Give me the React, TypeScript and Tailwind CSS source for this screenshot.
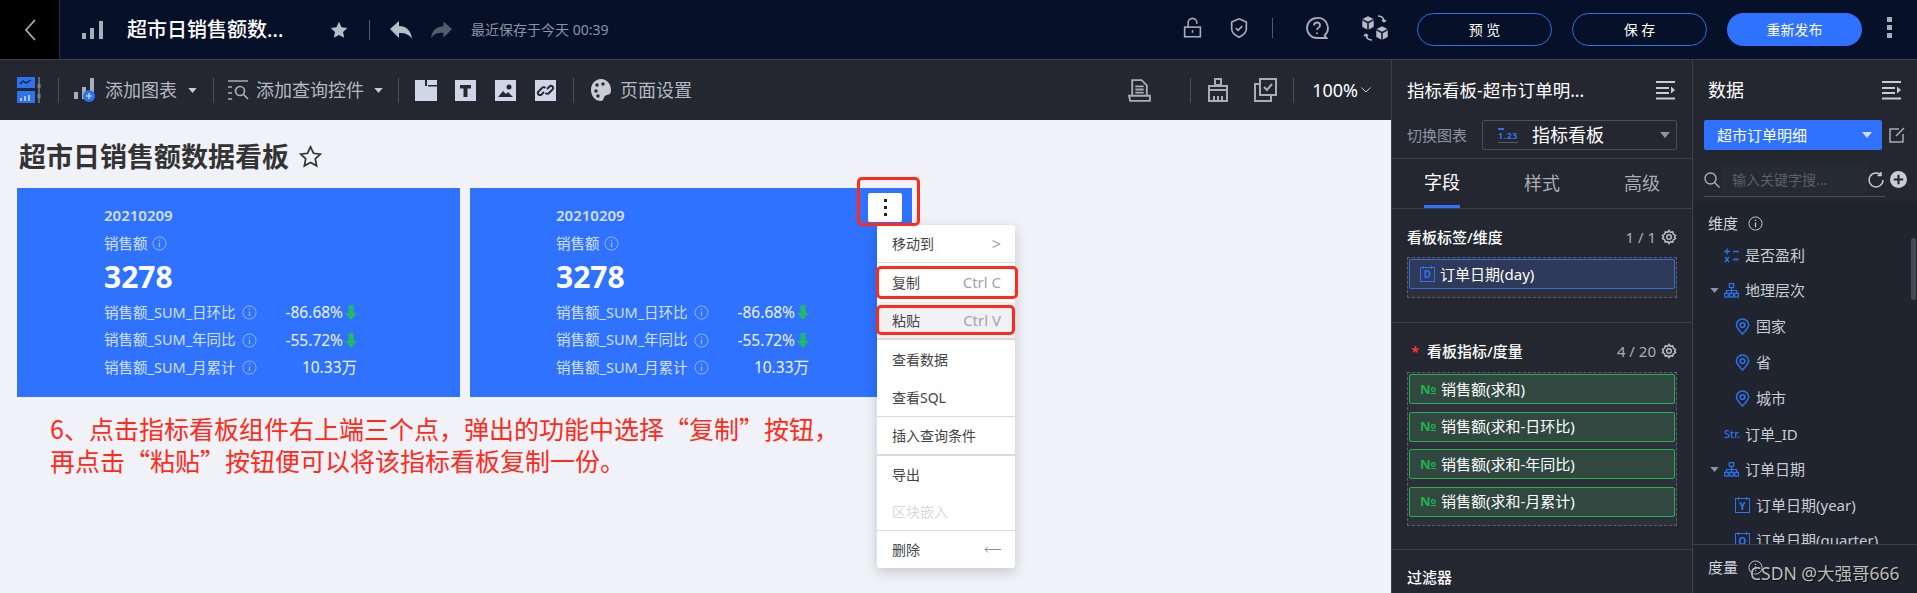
const Sep = ({ h = "h-[25px]", c = "bg-[#4a4e58]" }: { h?: string; c?: string }) => <div className={`w-px shrink-0 ${h} ${c}`} />

const Caret = ({ className = "" }: { className?: string }) => (
  <svg viewBox="0 0 10 6" className={`w-[9px] h-[5px] shrink-0 ${className}`}><path d="M0 0h10L5 6z" fill="currentColor" /></svg>
)

const Info = ({ className = "" }: { className?: string }) => (
  <svg viewBox="0 0 16 16" fill="none" stroke="currentColor" className={`w-[15px] h-[15px] shrink-0 ${className}`}>
    <circle cx="8" cy="8" r="7" />
    <path d="M8 7v5M8 4v1.4" strokeWidth="1.3" />
  </svg>
)

const Gear = () => (
  <svg viewBox="0 0 24 24" fill="none" stroke="#b8bcc6" strokeWidth="2.200" className="w-[16px] h-[16px] shrink-0">
    <circle cx="12" cy="12" r="3.500" />
    <path d="M12 2l2 3 3.600-.6 1 3.500 3.200 1.700L20.200 12l1.600 2.400-3.200 1.700-1 3.500L14 19l-2 3-2-3-3.600.6-1-3.500-3.200-1.700L3.800 12 2.200 9.600l3.200-1.700 1-3.500L10 5z" />
  </svg>
)

const Collapse = () => (
  <svg viewBox="0 0 20 20" className="w-[20px] h-[20px] shrink-0" fill="#c9ccd3">
    <rect x="0" y="1" width="19" height="2" />
    <rect x="0" y="7" width="13" height="2" />
    <rect x="0" y="12" width="13" height="2" />
    <rect x="0" y="17.500" width="19" height="2" />
    <path d="M15 6.500l4 3.500-4 3.500z" />
  </svg>
)

const Pin = () => (
  <svg viewBox="0 0 16 18" fill="none" stroke="#2f72f0" strokeWidth="1.600" className="w-[15px] h-[17px] shrink-0">
    <path d="M8 17C4 13 1.500 10.500 1.500 7.500a6.500 6.500 0 0113 0C14.500 10.500 12 13 8 17z" />
    <circle cx="8" cy="7.500" r="2.500" />
  </svg>
)

const Tree = () => (
  <svg viewBox="0 0 16 16" fill="none" stroke="#2f72f0" strokeWidth="1.300" className="w-[15px] h-[15px] shrink-0">
    <rect x="5.700" y="0.700" width="4.600" height="4" />
    <rect x="0.700" y="11" width="3.800" height="4" />
    <rect x="6.100" y="11" width="3.800" height="4" />
    <rect x="11.500" y="11" width="3.800" height="4" />
    <path d="M8 5v6M2.600 11V8h10.800v3" />
  </svg>
)

const CalIcon = ({ letter }: { letter: string }) => (
  <span className="relative flex items-center justify-center w-[15px] h-[15px] border-[1.500px] border-[#2f72f0] text-[#2f72f0] text-[10px] font-bold leading-none shrink-0">
    <span className="absolute left-[2px] right-[2px] -top-[2px] h-[3px] border-x-[1.500px] border-[#2f72f0]" />
    {letter}
  </span>
)

const NoIcon = () => <span className="w-[16px] text-[#22b14c] text-[13px] font-bold leading-none shrink-0">N<span className="text-[9px] underline align-[2px]">o</span></span>

const Pill = ({ children, tone }: { children: React.ReactNode; tone: "blue" | "green" }) => (
  <div className={`h-[30px] flex items-center rounded-[2px] pl-[10px] gap-[5px] text-[15px] text-white border ${tone === "blue" ? "bg-[#2f3a5a] border-[#2e6fe8]" : "bg-[#30483f] border-[#22b14c]"}`}>
    {children}
  </div>
)

const Row = ({ label, value, arrow }: { label: string; value: string; arrow?: boolean }) => (
  <div className="h-[27.500px] flex items-center text-[14.500px]">
    <span className="w-[134px] text-[#d5e0ff] whitespace-nowrap">{label}</span>
    <Info className="ml-[4px] text-[#9dbaff]" />
    <span className={`${arrow ? "w-[86px]" : "w-[100px]"} text-[15.500px] text-right text-[#eef3ff] whitespace-nowrap`}>{value}</span>
    {arrow && (
      <svg viewBox="0 0 12 15" className="ml-[2px] w-[12px] h-[15px] shrink-0"><path d="M3.500 0h5v8H12L6 15 0 8h3.500z" fill="#22b866" /></svg>
    )}
  </div>
)

const Card = ({ first }: { first?: boolean }) => (
  <div className={`${first ? "w-[443px] pl-[87px]" : "w-[442px] pl-[86px]"} h-[209px] bg-[#2e72ff] pt-[16px] shrink-0`}>
    <div className="h-[22px] flex items-center text-[15px] font-semibold text-[#d5e0ff]">20210209</div>
    <div className="h-[25px] mt-[5px] flex items-center gap-[4px] text-[14.500px] text-[#d5e0ff]">
      销售额 <Info className="text-[#9dbaff]" />
    </div>
    <div className="h-[40px] flex items-center text-[30px] font-bold text-white">3278</div>
    <div className="mt-[3px]">
      <Row label="销售额_SUM_日环比" value="-86.68%" arrow />
      <Row label="销售额_SUM_年同比" value="-55.72%" arrow />
      <Row label="销售额_SUM_月累计" value="10.33万" />
    </div>
  </div>
)

const MenuItem = ({ label, hint, disabled, active }: { label: string; hint?: React.ReactNode; disabled?: boolean; active?: boolean }) => (
  <div className={`flex-1 flex items-center justify-between pl-[15px] pr-[14px] text-[14px] ${disabled ? "text-[#d9d9d9]" : "text-[#444]"} ${active ? "bg-[#f0f0f5]" : ""}`}>
    <span>{label}</span>
    {hint && <span className="text-[15px] text-[#a3a3a3]">{hint}</span>}
  </div>
)

const RedBox = ({ className }: { className: string }) => <div className={`absolute border-[3.500px] border-[#ff2a1a] rounded-[5px] ${className}`} />

const LineIcon = ({ children, className }: { children: React.ReactNode; className: string }) => (
  <svg viewBox="0 0 24 24" fill="none" stroke="#a9adb7" strokeWidth="1.800" className={`shrink-0 ${className}`}>{children}</svg>
)

const Tile = ({ children }: { children: React.ReactNode }) => (
  <svg viewBox="0 0 21 21" className="w-[21px] h-[21px] shrink-0">
    <rect width="21" height="21" fill="#cfd6e8" />
    {children}
  </svg>
)

export default function App() {
  return (
    <div className="w-[1917px] h-[593px] overflow-hidden relative bg-[#24272f] font-['Noto_Sans','Noto_Sans_CJK_SC',sans-serif]">
      {/* top bar */}
      <div className="h-[60px] flex items-center bg-[#061028] border-b border-[#3a3f4a]">
        <div className="w-[60px] h-full bg-black border-r border-[#2a2f3c] flex items-center justify-center">
          <svg viewBox="0 0 12 24" fill="none" stroke="#a9adb7" strokeWidth="1.800" className="w-[12px] h-[24px]"><path d="M11 2L2 12l9 10" /></svg>
        </div>
        <svg viewBox="0 0 21 18" className="ml-[22px] w-[21px] h-[18px] shrink-0" fill="#a9adb7">
          <rect x="0" y="12" width="4" height="6" />
          <rect x="8" y="7" width="4" height="11" />
          <rect x="17" y="0" width="4" height="18" />
        </svg>
        <div className="ml-[24px] w-[157px] text-[20px] text-white whitespace-nowrap font-medium">超市日销售额数...</div>
        <svg viewBox="0 0 24 24" className="ml-[46px] w-[18px] h-[18px] shrink-0" fill="#b8bcc6"><path d="M12 1l3.400 7.300 7.600.9-5.600 5.300 1.500 7.900L12 18.500l-6.900 3.900 1.500-7.900L1 9.200l7.600-.9z" /></svg>
        <div className="ml-[21px]"><Sep h="h-[20px]" c="bg-[#555a66]" /></div>
        <svg viewBox="0 0 22 18" className="ml-[20px] w-[22px] h-[18px] shrink-0" fill="#b8bcc6"><path d="M9 0v5c7 0 12 4 13 13-3-5-7-6-13-6v5L0 8z" /></svg>
        <svg viewBox="0 0 22 18" className="ml-[19px] w-[21px] h-[18px] shrink-0" fill="#555b69"><path d="M13 0v5C6 5 1 9 0 18c3-5 7-6 13-6v5l9-9z" /></svg>
        <div className="ml-[19px] text-[14px] text-[#8c93a3] whitespace-nowrap">最近保存于今天 00:39</div>
        <div className="flex-1" />
        <LineIcon className="w-[21px] h-[26px] -mt-[4px]">
          <path d="M7 11V6a5 5 0 0110 0v1" />
          <rect x="3" y="11" width="18" height="11" />
          <path d="M12 14.500v3" />
        </LineIcon>
        <LineIcon className="ml-[25px] w-[22px] h-[24px] -mt-[4px]">
          <path d="M12 2l8 3.500V13c0 4-4 7-8 9-4-2-8-5-8-9V5.500z" />
          <path d="M8.500 12l2.500 2.500 4.500-4.500" />
        </LineIcon>
        <div className="ml-[22px] -mt-[4px]"><Sep h="h-[20px]" c="bg-[#555a66]" /></div>
        <LineIcon className="ml-[32px] w-[24px] h-[24px] -mt-[4px]">
          <path d="M12 2a10 10 0 100 20h9.500l-2-2.600A10 10 0 0012 2z" />
          <path d="M9 9.500a3 3 0 116 0c0 2-3 2.300-3 4.500M12 16.500v1.500" />
        </LineIcon>
        <svg viewBox="0 0 28 28" className="ml-[32px] w-[28px] h-[28px] shrink-0 -mt-[4px]" fill="#b8bcc6" stroke="#061028" strokeWidth="0.500">
          <path d="M1 5l6-3 6 3-6 3zM1 6l5.500 3v7L1 13zM13 6L7.500 9v7l5.500-3z" />
          <path d="M15 15l6-3 6 3-6 3zM15 16l5.500 3v7L15 23zM27 16l-5.500 3v7l5.500-3z" />
          <path d="M17 2c4 0 6 2 6 6M23 8l-2-2M23 8l2-2M11 26c-4 0-6-2-6-6M5 20l-2 2M5 20l2 2" fill="none" stroke="#b8bcc6" strokeWidth="1.500" />
        </svg>
        <button className="ml-[28px] w-[135px] h-[33px] rounded-full border border-[#2f6fe8] text-white text-[14px]">预 览</button>
        <button className="ml-[20px] w-[135px] h-[33px] rounded-full border border-[#2f6fe8] text-white text-[14px]">保 存</button>
        <button className="ml-[20px] w-[135px] h-[33px] rounded-full bg-[#2e72ff] text-white text-[14px]">重新发布</button>
        <div className="ml-[25px] mr-[25px] flex flex-col gap-[3px] -mt-[4px]">
          <span className="w-[5px] h-[5px] bg-[#a9adb7]" />
          <span className="w-[5px] h-[5px] bg-[#a9adb7]" />
          <span className="w-[5px] h-[5px] bg-[#a9adb7]" />
        </div>
      </div>

      <div className="flex h-[533px]">
        {/* left column */}
        <div className="w-[1391px] shrink-0 flex flex-col">
          <div className="h-[60px] shrink-0 flex items-center pl-[17px] text-[18px] text-[#b4b8c2]">
            <svg viewBox="0 0 24 26" className="w-[24px] h-[26px] shrink-0">
              <rect x="0" y="0" width="18" height="11" fill="#2f72f0" />
              <rect x="0" y="14" width="18" height="12" fill="#2f72f0" />
              <path d="M3 7l3-3 3 2 5-3" stroke="#10182c" strokeWidth="1.300" fill="none" />
              <path d="M4 24v-3M8 24v-5M12 24v-6" stroke="#d5e0ff" strokeWidth="1.500" />
              <path d="M22 0v26" stroke="#7b808c" strokeWidth="1.500" />
              <rect x="20.500" y="7" width="3" height="4" fill="#7b808c" />
              <rect x="20.500" y="17" width="3" height="4" fill="#7b808c" />
            </svg>
            <div className="ml-[17px]"><Sep /></div>
            <svg viewBox="0 0 22 24" className="ml-[15px] w-[22px] h-[24px] shrink-0">
              <rect x="0" y="14" width="4" height="7" fill="#a9adb7" />
              <rect x="8" y="9" width="4" height="12" fill="#a9adb7" />
              <rect x="16" y="0" width="4" height="14" fill="#a9adb7" />
              <circle cx="15" cy="18" r="6" fill="#2f72f0" />
              <path d="M15 15v6M12 18h6" stroke="#dfe8ff" strokeWidth="1.200" />
            </svg>
            <span className="ml-[9px] whitespace-nowrap">添加图表</span>
            <Caret className="ml-[11px] text-[#c9ccd3]" />
            <div className="ml-[16px]"><Sep /></div>
            <svg viewBox="0 0 21 20" className="ml-[14px] w-[21px] h-[20px] shrink-0" fill="none" stroke="#a9adb7" strokeWidth="1.700">
              <path d="M0 1h20M0 7h4M0 13h4M0 19h4" />
              <circle cx="12" cy="11" r="4.500" />
              <path d="M15.500 14.500L20 19" />
            </svg>
            <span className="ml-[7px] whitespace-nowrap">添加查询控件</span>
            <Caret className="ml-[10px] text-[#c9ccd3]" />
            <div className="ml-[15px]"><Sep /></div>
            <svg viewBox="0 0 22 21" className="ml-[16px] w-[22px] h-[21px] shrink-0">
              <path d="M0 0h10v6h2V0h10v5H13v1.500h9V21H0z" fill="#cfd6e8" />
            </svg>
            <div className="ml-[18px]"><Tile><path d="M5 5h11v3.500h-3.500V17h-4V8.500H5z" fill="#24272f" /></Tile></div>
            <div className="ml-[19px]"><Tile><path d="M3 17l5-6 3 3 2-2 5 5z" fill="#24272f" /><circle cx="14" cy="7" r="2.500" fill="#24272f" /></Tile></div>
            <div className="ml-[19px]"><Tile><path d="M9 12l-2.500 2.500a2 2 0 01-3-3L7 8a2.500 2.500 0 013.500 0M12 9l2.500-2.500a2 2 0 013 3L14 13a2.500 2.500 0 01-3.500 0" fill="none" stroke="#24272f" strokeWidth="1.800" /></Tile></div>
            <div className="ml-[17px]"><Sep /></div>
            <svg viewBox="0 0 20 24" className="ml-[17px] w-[20px] h-[24px] shrink-0" fill="#c9ccd3">
              <path d="M10 1C4 1 0 6 0 12s4 11 10 11c3 0 2-3 4-5s6 0 6-6c0-6-4-11-10-11z" />
              <circle cx="6" cy="7" r="1.700" fill="#24272f" />
              <circle cx="12" cy="6" r="1.700" fill="#24272f" />
              <circle cx="5" cy="13" r="1.700" fill="#24272f" />
              <circle cx="7" cy="18" r="1.700" fill="#24272f" />
            </svg>
            <span className="ml-[9px] whitespace-nowrap">页面设置</span>
            <div className="flex-1" />
            <LineIcon className="w-[25px] h-[27px]">
              <path d="M5 17V2h9l5 5v10" />
              <path d="M8 8h8M8 11h8M8 14h8" />
              <path d="M2 17h20v5H3z" />
            </LineIcon>
            <div className="ml-[38px]"><Sep /></div>
            <svg viewBox="0 0 22 24" className="ml-[16px] w-[22px] h-[24px] shrink-0" fill="none" stroke="#a9adb7" strokeWidth="2">
              <path d="M8 1h6v6H8zM2 8h18v4H2zM2 12h18v11H2z" />
              <path d="M7 23v-5M11 23v-5M15 23v-5" />
            </svg>
            <svg viewBox="0 0 23 24" className="ml-[25px] w-[23px] h-[24px] shrink-0" fill="none" stroke="#a9adb7" strokeWidth="2">
              <path d="M6 1h16v16H6z" />
              <path d="M6 6H1v17h16v-6" />
              <path d="M10 9l3 3 5-6" />
            </svg>
            <div className="ml-[16px]"><Sep /></div>
            <span className="ml-[18px] text-[18px] text-white whitespace-nowrap">100%</span>
            <svg viewBox="0 0 10 6" fill="none" stroke="#c9ccd3" strokeWidth="1" className="ml-[3px] w-[10px] h-[6px] shrink-0"><path d="M0.500 0.500L5 5l4.500-4.500" /></svg>
            <div className="w-[20px] shrink-0" />
          </div>

          {/* canvas */}
          <div className="flex-1 relative bg-[#f0f2f7] overflow-hidden">
            <div className="h-[68px] pl-[19px] pt-[5px] flex items-center">
              <h1 className="text-[27px] leading-none font-semibold text-[#333]">超市日销售额数据看板</h1>
              <svg viewBox="0 0 24 24" fill="none" stroke="#333" strokeWidth="1.800" className="ml-[10px] w-[23px] h-[23px] shrink-0"><path d="M12 2l3.100 6.600 7.200.9-5.300 5 1.400 7.200L12 18.200l-6.400 3.500L7 14.500l-5.300-5 7.200-.9z" /></svg>
            </div>
            <div className="flex gap-[10px] pl-[17px]">
              <Card first />
              <Card />
            </div>
            <div className="pl-[50px] mt-[15px] text-[25px] leading-[32px] text-[#ff2a1a] whitespace-nowrap font-['Noto_Sans_CJK_SC',sans-serif]">
              <p>6、点击指标看板组件右上端三个点，弹出的功能中选择“复制”按钮，</p>
              <p>再点击“粘贴”按钮便可以将该指标看板复制一份。</p>
            </div>

            {/* kebab on card */}
            <div className="absolute left-[868px] top-[73px] w-[34px] h-[29px] bg-white rounded-[2px] flex flex-col items-center justify-center gap-[4px]">
              <span className="w-[3px] h-[3px] bg-[#222]" />
              <span className="w-[3px] h-[3px] bg-[#222]" />
              <span className="w-[3px] h-[3px] bg-[#222]" />
            </div>

            {/* popup menu */}
            <div className="absolute left-[877px] top-[105px] w-[138px] h-[343px] bg-white rounded-[3px] shadow-[0_4px_14px_rgba(0,0,0,0.18)] flex flex-col overflow-hidden">
              <div className="h-[37px] flex"><MenuItem label="移动到" hint={<span className="text-[16px]">&gt;</span>} /></div>
              <div className="h-[1px] bg-[#d9d9d9]" />
              <div className="h-[38px] flex"><MenuItem label="复制" hint="Ctrl C" /></div>
              <div className="h-[37px] flex pt-[1px]"><MenuItem label="粘贴" hint="Ctrl V" active /></div>
              <div className="h-[2px] bg-[#d9d9d9]" />
              <div className="h-[38px] flex"><MenuItem label="查看数据" /></div>
              <div className="h-[38px] flex"><MenuItem label="查看SQL" /></div>
              <div className="h-[1px] bg-[#d9d9d9]" />
              <div className="h-[37px] flex"><MenuItem label="插入查询条件" /></div>
              <div className="h-[2px] bg-[#d9d9d9]" />
              <div className="h-[37px] flex"><MenuItem label="导出" /></div>
              <div className="h-[37px] flex"><MenuItem label="区块嵌入" disabled /></div>
              <div className="h-[1px] bg-[#d9d9d9]" />
              <div className="flex-1 flex"><MenuItem label="删除" hint={
                <svg viewBox="0 0 17 7" fill="none" stroke="#8f8f8f" className="w-[17px] h-[7px]"><path d="M17 3.500H1M4 .5L1 3.500 4 6.500" /></svg>
              } /></div>
            </div>

            {/* red call-outs */}
            <RedBox className="left-[857px] top-[57px] w-[63px] h-[49px]" />
            <RedBox className="left-[876px] top-[146px] w-[142px] h-[33px]" />
            <RedBox className="left-[876px] top-[185px] w-[139px] h-[30px]" />
          </div>
        </div>

        {/* field panel */}
        <div className="w-[301px] shrink-0 border-l border-[#3a3f4a] flex flex-col bg-[#24272f]">
          <div className="h-[60px] shrink-0 flex items-center justify-between pl-[15px] pr-[16px] text-[17.500px] text-white whitespace-nowrap">
            指标看板-超市订单明...
            <Collapse />
          </div>
          <div className="h-[39px] shrink-0 flex items-start pl-[15px] pr-[15px] border-b border-[#3a3f4a]">
            <span className="w-[75px] h-[30px] flex items-center text-[15px] text-[#8c93a3] whitespace-nowrap">切换图表</span>
            <div className="flex-1 h-[30px] flex items-center rounded-[2px] border border-[#4a4e58] pl-[15px] pr-[5px]">
              <span className="relative w-[20px] text-[9px] leading-none font-bold text-[#2f72f0] border-b border-[#555a66] pb-[2px] pt-[3px] tracking-[0.500px]">
                <span className="absolute left-0 top-0 w-[6px] h-[2px] bg-[#2f72f0]" />
                1.23
              </span>
              <span className="ml-[14px] text-[18px] text-white">指标看板</span>
              <Caret className="ml-auto mr-[1px] w-[10px] h-[6px] text-[#8c93a3]" />
            </div>
          </div>
          <div className="h-[50px] shrink-0 flex justify-between px-[32px] border-b border-[#3a3f4a] text-[18px] text-[#a9adb7]">
            <div className="w-[36px] h-full flex items-center justify-center text-white border-b-[3px] border-[#2e72ff] whitespace-nowrap">字段</div>
            <div className="w-[36px] h-full flex items-center justify-center whitespace-nowrap">样式</div>
            <div className="w-[36px] h-full flex items-center justify-center whitespace-nowrap">高级</div>
          </div>
          <div className="h-[114px] shrink-0 border-b border-[#3a3f4a] px-[15px] pt-[17px]">
            <div className="h-[22px] flex items-center justify-between text-[15px] font-medium text-white">
              看板标签/维度
              <span className="flex items-center gap-[5px] text-[#a9adb7] font-normal">1 / 1 <Gear /></span>
            </div>
            <div className="mt-[9px] border border-dashed border-[#5a5e68] bg-[#2d3038] p-[1px] pb-[8px]">
              <Pill tone="blue"><CalIcon letter="D" />订单日期(day)</Pill>
            </div>
          </div>
          <div className="h-[227px] shrink-0 border-b border-[#3a3f4a] px-[15px] pt-[17px]">
            <div className="h-[22px] flex items-center justify-between text-[15px] font-medium text-white">
              <span className="flex items-center">
                <span className="ml-[4px] w-[16px] text-[#ff3b30]">*</span>看板指标/度量
              </span>
              <span className="flex items-center gap-[5px] text-[#a9adb7] font-normal">4 / 20 <Gear /></span>
            </div>
            <div className="mt-[10px] border border-dashed border-[#5a5e68] bg-[#2d3038] p-[1px] pb-[8px] flex flex-col gap-[7.500px]">
              <Pill tone="green"><NoIcon />销售额(求和)</Pill>
              <Pill tone="green"><NoIcon />销售额(求和-日环比)</Pill>
              <Pill tone="green"><NoIcon />销售额(求和-年同比)</Pill>
              <Pill tone="green"><NoIcon />销售额(求和-月累计)</Pill>
            </div>
          </div>
          <div className="pl-[15px] pt-[16px] text-[15px] font-medium text-white">过滤器</div>
        </div>

        {/* data panel */}
        <div className="w-[225px] shrink-0 border-l border-[#3a3f4a] flex flex-col bg-[#20242e] relative overflow-hidden">
          <div className="bg-[#24272f] h-[141px] shrink-0 pl-[11px] pr-[12px]">
            <div className="h-[60px] flex items-center justify-between pl-[4px] pr-[3px] text-[18px] text-white">
              数据
              <Collapse />
            </div>
            <div className="flex items-center">
              <div className="w-[178px] h-[30px] bg-[#2e72ff] rounded-[2px] flex items-center pl-[13px] pr-[10px] text-[15px] text-white whitespace-nowrap">
                超市订单明细
                <Caret className="ml-auto w-[10px] h-[6px] text-[#cfe0ff]" />
              </div>
              <svg viewBox="0 0 16 16" fill="none" stroke="#a9adb7" strokeWidth="1.500" className="ml-[7px] w-[16px] h-[16px] shrink-0">
                <path d="M14 7v8H1V2h9M15 1L7 9" />
              </svg>
            </div>
            <div className="mt-[13px] flex items-center w-[203px] relative">
              <svg viewBox="0 0 16 16" fill="none" stroke="#a9adb7" strokeWidth="1.400" className="w-[16px] h-[16px] shrink-0">
                <circle cx="6.500" cy="6.500" r="5.500" />
                <path d="M10.500 10.500L15.500 15.500" />
              </svg>
              <div className="ml-[2px] w-[145px] h-[33px] bg-[#262a33] flex items-center pl-[10px] text-[14px] text-[#5a5f6b] whitespace-nowrap">输入关键字搜...</div>
              <svg viewBox="0 0 18 18" fill="none" stroke="#c9ccd3" strokeWidth="1.500" className="w-[18px] h-[18px] shrink-0">
                <path d="M16 9a7 7 0 11-2-5M14 1v3.500h-3.500" />
              </svg>
              <svg viewBox="0 0 18 18" className="ml-[5px] w-[17px] h-[17px] shrink-0">
                <circle cx="9" cy="9" r="9" fill="#c9ccd3" />
                <path d="M9 4v10M4 9h10" stroke="#24272f" strokeWidth="2.200" />
              </svg>
              <div className="absolute left-0 top-[33px] w-[181px] h-px bg-[#4a4e58]" />
            </div>
          </div>
          <div className="pl-[15px] h-[36px] shrink-0 flex items-end pb-[2px] text-[15px] text-[#d0d3da]">
            <span className="flex items-center gap-[10px] leading-[24px]">维度 <Info className="text-[#c9ccd3]" /></span>
          </div>
          <div className="flex flex-col text-[15px] text-[#c9ccd3]">
            <div className="h-[36px] flex items-center gap-[6px] pl-[31px] whitespace-nowrap">
              <svg viewBox="0 0 15 15" stroke="#2f72f0" strokeWidth="1.400" className="w-[15px] h-[15px] shrink-0"><path d="M0 3.500h6M3 .5v6M9 3.500h6M1 9l4 5M5 9l-4 5M9 11.500h6M12 9v.5M12 13.500v.5" /></svg>
              是否盈利
            </div>
            <div className="h-[35px] flex items-center pl-[17px] whitespace-nowrap">
              <Caret className="text-[#8c93a3]" /><span className="ml-[5px]"><Tree /></span><span className="ml-[6px]">地理层次</span>
            </div>
            <div className="h-[36px] flex items-center gap-[6px] pl-[42px]"><Pin />国家</div>
            <div className="h-[36px] flex items-center gap-[6px] pl-[42px]"><Pin />省</div>
            <div className="h-[36px] flex items-center gap-[6px] pl-[42px]"><Pin />城市</div>
            <div className="h-[36px] flex items-center pl-[31px] whitespace-nowrap">
              <span className="w-[21px] text-[#2f72f0] text-[11px] font-medium">Str.</span>订单_ID
            </div>
            <div className="h-[35px] flex items-center pl-[17px] whitespace-nowrap">
              <Caret className="text-[#8c93a3]" /><span className="ml-[5px]"><Tree /></span><span className="ml-[6px]">订单日期</span>
            </div>
            <div className="h-[37px] flex items-center gap-[6px] pl-[42px] whitespace-nowrap"><CalIcon letter="Y" />订单日期(year)</div>
            <div className="h-[33px] flex items-center gap-[6px] pl-[42px] whitespace-nowrap"><CalIcon letter="Q" />订单日期(quarter)</div>
          </div>
          {/* measures block pinned to the panel bottom */}
          <div className="absolute left-0 right-0 top-[484px] h-[49px] overflow-hidden bg-[#20242e] border-t border-[#3a3f4a] pl-[15px] pt-[10px] text-[15px] text-[#d0d3da]">
            <span className="flex items-center gap-[10px] leading-[24px]">度量 <Info className="text-[#c9ccd3]" /></span>
            <div className="mt-[11px] ml-[16px] flex items-center gap-[6px] leading-[20px] text-[#c9ccd3]"><NoIcon />利润</div>
          </div>
          {/* scrollbar */}
          <div className="absolute right-[1px] top-[178px] w-[5px] h-[62px] rounded-full bg-[#454a58]" />
        </div>
      </div>

      {/* page watermark */}
      <div className="absolute left-[1750px] top-[559px] text-[17.500px] leading-[28px] text-[#bdbdbd] [text-shadow:1px_1px_1px_rgba(0,0,0,0.7)] whitespace-nowrap">CSDN @大强哥666</div>
    </div>
  )
}
